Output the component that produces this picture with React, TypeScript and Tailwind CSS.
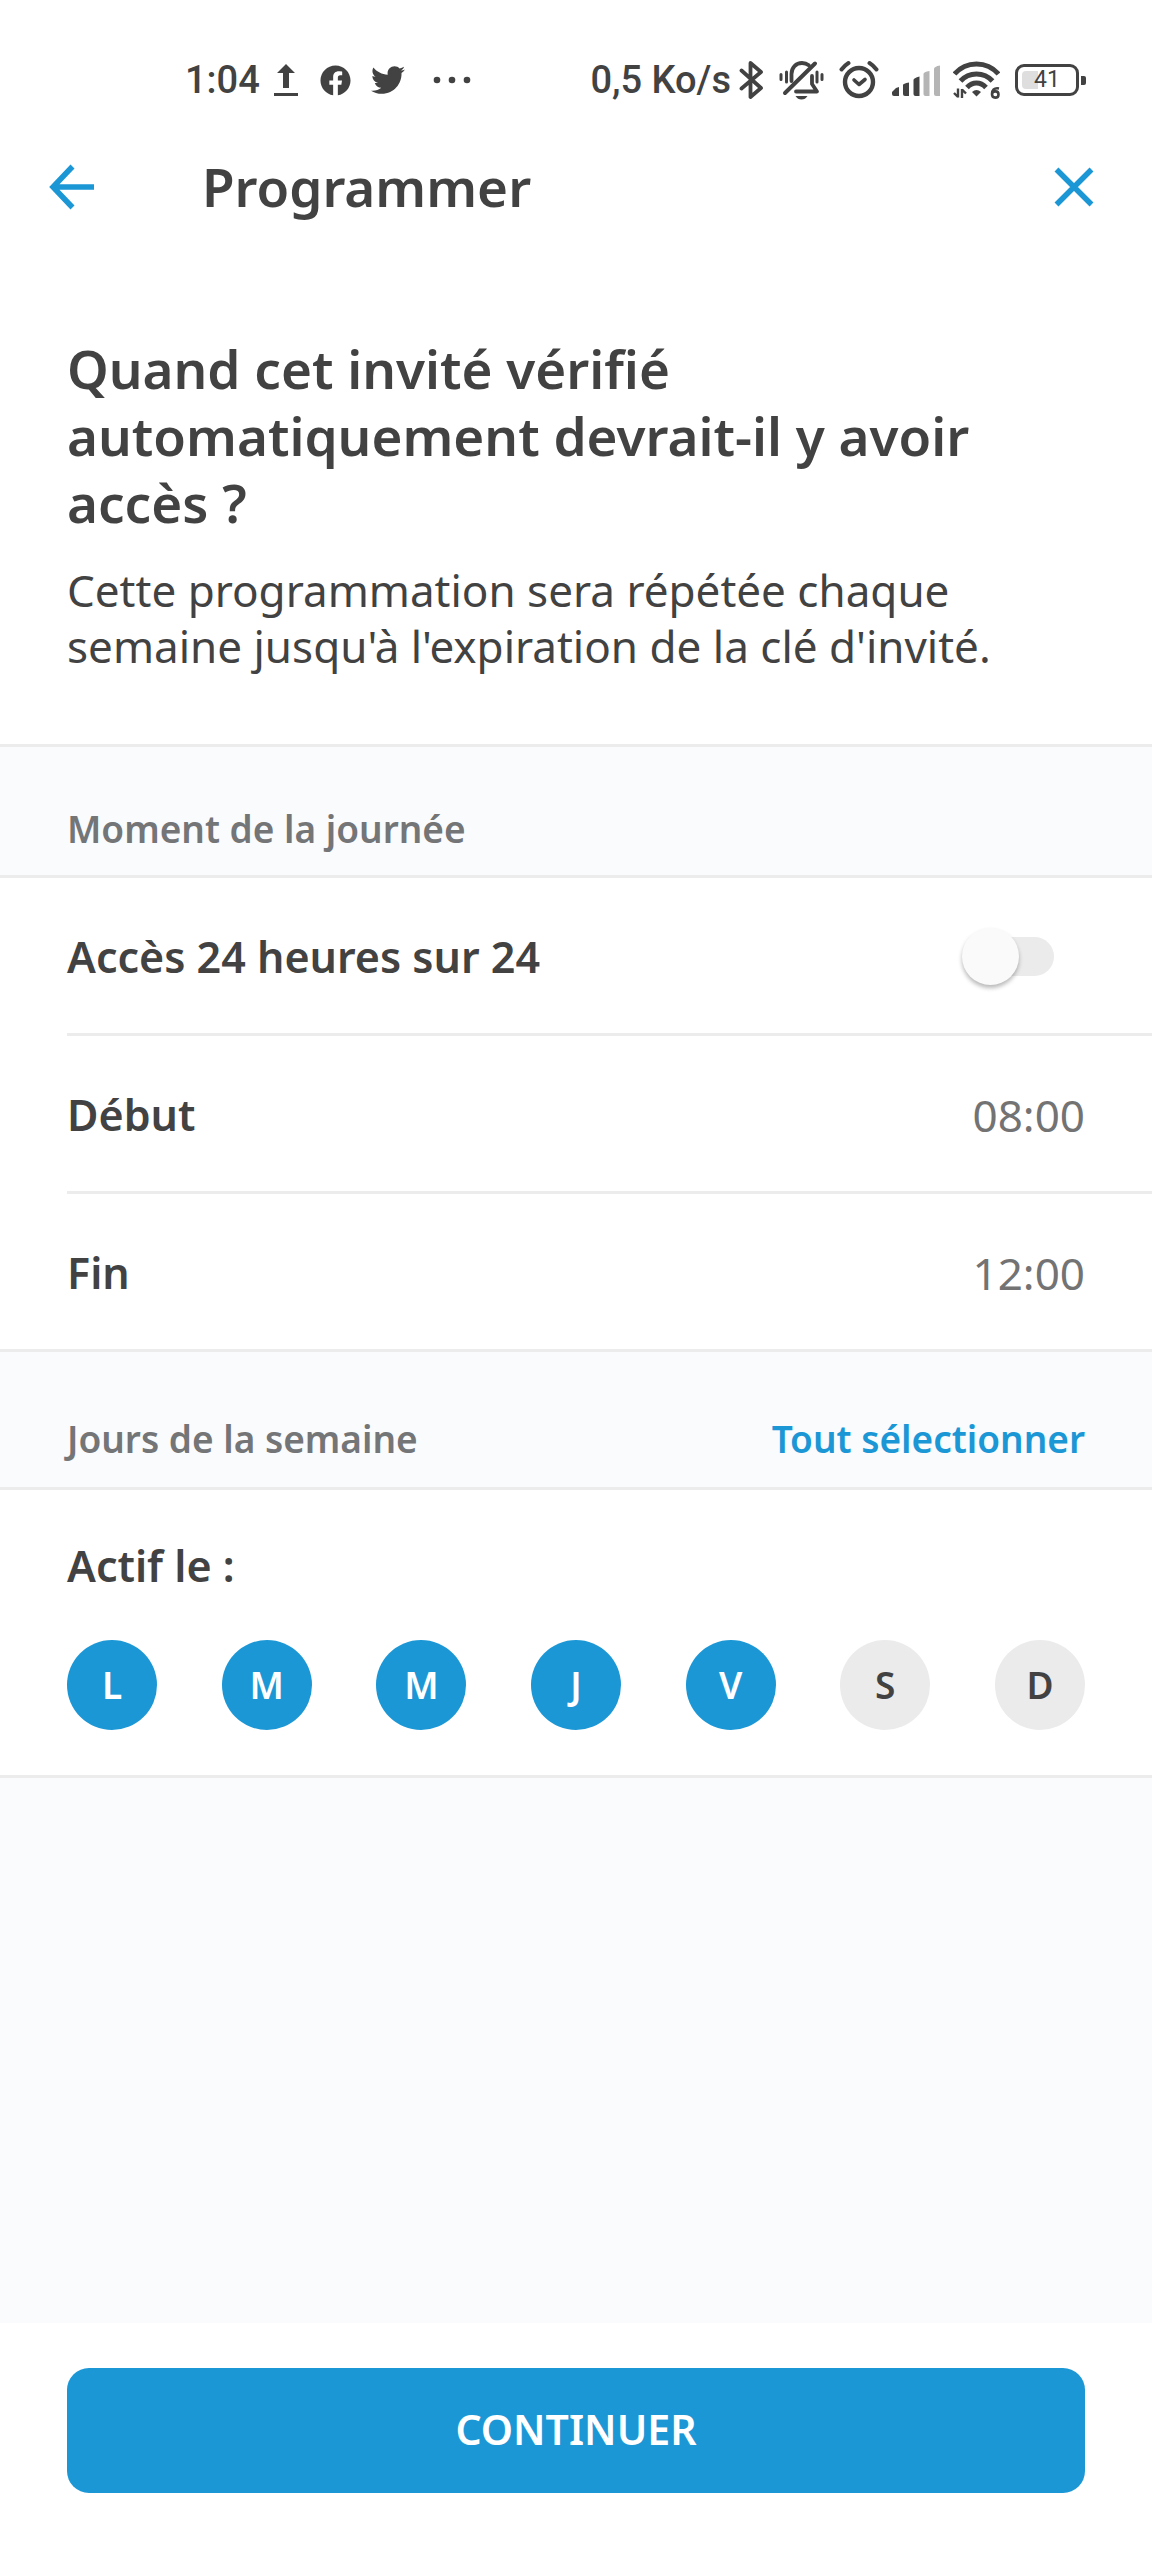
import { useState } from "react";
import { FaFacebook, FaTwitter } from "react-icons/fa";

function UploadIcon() {
  return (
    <svg className="ml-3.5 h-[34px] w-6" viewBox="0 0 24 34" fill="currentColor" aria-hidden="true">
      <path d="M12 1l9 9h-6v15H9V10H3z" />
      <rect x="0" y="30" width="24" height="3" />
    </svg>
  );
}

function DotsIcon() {
  return (
    <svg className="ml-7 h-2 w-[38px]" viewBox="0 0 38 8" fill="currentColor" aria-hidden="true">
      <circle cx="4" cy="4" r="3.3" />
      <circle cx="19" cy="4" r="3.3" />
      <circle cx="34" cy="4" r="3.3" />
    </svg>
  );
}

function BluetoothIcon() {
  return (
    <svg className="ml-2 h-10 w-[25px]" viewBox="0 0 25 40" fill="none" stroke="currentColor" strokeWidth="3.8" strokeLinecap="round" strokeLinejoin="round" aria-hidden="true">
      <path d="M2.5 10.5L22 28 11.5 37V3L22 12 2.5 28.5" />
    </svg>
  );
}

function BellOffIcon() {
  return (
    <svg className="ml-[15px] h-10 w-[45px]" viewBox="0 0 45 40" fill="none" stroke="currentColor" strokeLinecap="round" aria-hidden="true">
      <path strokeWidth="4" d="M6 33L36 3.5" />
      <path strokeWidth="3.8" d="M12.5 21V14c0-6.500 4.500-11 10.500-11 2.800 0 5 .8 6.800 2.200" />
      <path strokeWidth="3.8" strokeLinejoin="round" d="M33 16v8l5 7.500H17" />
      <path strokeWidth="3" d="M2 14.500v5M7.500 12v10M38 12v10M43 14.500v5" />
      <path fill="currentColor" stroke="none" d="M16.500 36h12c-1.400 2.500-3.500 3.500-6 3.500s-4.600-1-6-3.500z" />
    </svg>
  );
}

function AlarmIcon() {
  return (
    <svg className="ml-[15px] h-10 w-10" viewBox="0 0 40 40" fill="none" stroke="currentColor" strokeLinecap="round" aria-hidden="true">
      <circle cx="20" cy="22" r="14" strokeWidth="4.4" />
      <path strokeWidth="3.6" strokeLinejoin="round" d="M15 20l5 4.500 6-5" />
      <path strokeWidth="4" d="M2.500 9.500q3-4 7-6.500M37.500 9.500q-3-4-7-6.500" />
    </svg>
  );
}

function SignalIcon() {
  return (
    <svg className="ml-[13px] h-8 w-12" viewBox="0 0 48 32" fill="currentColor" aria-hidden="true">
      <path d="M7 23v9H2q-2 0-2-2v-2l4-4z" />
      <path d="M17 18.500V32h-4q-2 0-2-2v-9q0-1.500 6-2.500z" />
      <path d="M27.500 12.500V32h-4q-2 0-2-2V16q0-2 6-3.500z" />
      <g fill="#b5b5b5">
        <path d="M37.500 7V32h-4q-2 0-2-2V10q0-2 6-3z" />
        <path d="M48 1.500V32h-4q-2 0-2-2V5q0-2.500 6-3.500z" />
      </g>
    </svg>
  );
}

function WifiIcon() {
  return (
    <svg className="ml-[13px] h-[38px] w-[47px]" viewBox="0 0 47 38" fill="none" stroke="currentColor" strokeWidth="5" aria-hidden="true">
      <path d="M1.500 13C13 -.5 34 -.5 45.500 13" />
      <path d="M7.500 20c8.500-9.500 23.500-9.500 32 0" />
      <path d="M14 26.500c5.500-6 13.500-6 19 0" />
      <path fill="currentColor" stroke="none" d="M23.500 35.500L19 31q4.500-4 9 0z" />
      <path strokeWidth="2.400" d="M5 27.500v9M1 32l4 4M9 37v-9M13 32.500l-4-4" />
      <path strokeWidth="2.600" d="M46 27.500c-5-1-7 2-7 5.500 0 2.500 1.500 3.600 3.200 3.600s3.300-1 3.300-3.200-1.500-3-3-3-3 1-3.400 2" />
    </svg>
  );
}

function Battery({ level }: { level: number }) {
  return (
    <div className="ml-[15px] flex items-center gap-0.5" role="img" aria-label={`Batterie ${level} %`}>
      <div className="relative flex h-8 w-16 items-center justify-center rounded-[9px] border-3 border-current">
        <span className="absolute left-1 h-[18px] w-4 rounded-l-[4px] bg-[#dedede]" />
        <span className="relative text-[23px] leading-6 font-normal">{level}</span>
      </div>
      <span className="h-[9px] w-[5px] rounded-r-[2px] bg-current" />
    </div>
  );
}

function StatusBar() {
  return (
    <div className="flex h-[160px] items-center justify-between pr-[66px] pl-[185px] font-['Roboto',sans-serif] text-[38px] leading-[44px] font-medium">
      <div className="flex items-center">
        <span>1:04</span>
        <UploadIcon />
        <FaFacebook className="ml-[22px] size-[31px]" aria-hidden="true" />
        <FaTwitter className="ml-5 size-[34px]" aria-hidden="true" />
        <DotsIcon />
      </div>
      <div className="flex items-center">
        <span>0,5 Ko/s</span>
        <BluetoothIcon />
        <BellOffIcon />
        <AlarmIcon />
        <SignalIcon />
        <WifiIcon />
        <Battery level={41} />
      </div>
    </div>
  );
}

function TimeRow({ id, label, value }: { id: string; label: string; value: string }) {
  return (
    <div className="ml-[67px] flex h-[158px] items-center justify-between border-t-3 border-[#ececec] pt-0.5 pr-[67px]">
      <span id={id} className="text-[43px] leading-[56px] font-semibold">{label}</span>
      <button type="button" aria-describedby={id} className="text-[44px] leading-[56px] font-normal text-[#737373]">
        {value}
      </button>
    </div>
  );
}

const DAYS = [
  { name: "Lundi", letter: "L" },
  { name: "Mardi", letter: "M" },
  { name: "Mercredi", letter: "M" },
  { name: "Jeudi", letter: "J" },
  { name: "Vendredi", letter: "V" },
  { name: "Samedi", letter: "S" },
  { name: "Dimanche", letter: "D" },
];

export default function App() {
  const [allDay, setAllDay] = useState(false);
  const [active, setActive] = useState([true, true, true, true, true, false, false]);

  return (
    <div className="flex min-h-screen flex-col bg-white font-['Noto_Sans',sans-serif] text-[#424242]">
      <StatusBar />

      <header className="flex h-[54px] items-center pr-[58px] pl-12">
        <button type="button" aria-label="Retour" className="text-[#1c97d6]">
          <svg className="h-12 w-[46px]" viewBox="0 0 46 48" fill="none" stroke="currentColor" strokeWidth="5.500" aria-hidden="true">
            <path d="M24.500 3.500L5 24l19.500 20.500M5 24h41" />
          </svg>
        </button>
        <h1 className="ml-[108px] flex-1 text-[53px] leading-[54px] font-semibold">Programmer</h1>
        <button type="button" aria-label="Fermer" className="text-[#1c97d6]">
          <svg className="size-10" viewBox="0 0 40 40" fill="none" stroke="currentColor" strokeWidth="5.500" aria-hidden="true">
            <path d="M2.500 2.500l35 35M37.500 2.500l-35 35" />
          </svg>
        </button>
      </header>

      <section className="px-[67px] pt-[121px] pb-[70px]">
        <h2 className="text-[53px] leading-[67px] font-semibold">
          Quand cet invité vérifié automatiquement devrait-il y avoir accès ?
        </h2>
        <p className="mt-[26px] text-[44px] leading-[56px] font-normal">
          Cette programmation sera répétée chaque semaine jusqu'à l'expiration de la clé d'invité.
        </p>
      </section>

      <div className="border-y-3 border-[#ececec] bg-[#fafbfd] px-[67px] pt-[58px] pb-[22px]">
        <h3 className="text-[37px] leading-[48px] font-semibold text-[#747577]">Moment de la journée</h3>
      </div>

      <section>
        <div className="flex h-[155px] items-center justify-between pt-0.5 pr-[98px] pl-[67px]">
          <label htmlFor="all-day" className="text-[43px] leading-[56px] font-semibold">Accès 24 heures sur 24</label>
          <span className="relative flex h-[57px] w-[92px] items-center">
            <input
              id="all-day"
              type="checkbox"
              role="switch"
              checked={allDay}
              onChange={(e) => setAllDay(e.target.checked)}
              className="peer ml-2 h-[39px] w-[84px] appearance-none rounded-full bg-[#ebebeb] checked:bg-[#a4d5ef]"
            />
            <span className="pointer-events-none absolute left-0 size-[57px] rounded-full bg-[#fafafa] shadow-[0_3px_4px_rgba(0,0,0,0.28)] peer-checked:right-0 peer-checked:left-auto peer-checked:bg-[#1c97d6]" />
          </span>
        </div>
        <TimeRow id="start" label="Début" value="08:00" />
        <TimeRow id="end" label="Fin" value="12:00" />
      </section>

      <div className="flex items-center justify-between border-y-3 border-[#ececec] bg-[#fafbfd] px-[67px] pt-[63px] pb-6">
        <h3 className="text-[37px] leading-[48px] font-semibold text-[#747577]">Jours de la semaine</h3>
        <button
          type="button"
          onClick={() => setActive(DAYS.map(() => true))}
          className="text-[37px] leading-[48px] font-semibold text-[#1c97d6]"
        >
          Tout sélectionner
        </button>
      </div>

      <section className="px-[67px] pt-12 pb-[45px]">
        <h3 className="text-[43px] leading-[56px] font-semibold">Actif le :</h3>
        <div className="mt-[46px] flex justify-between">
          {DAYS.map((day, i) => (
            <button
              key={day.name}
              type="button"
              aria-label={day.name}
              aria-pressed={active[i]}
              onClick={() => setActive(active.map((on, j) => (j === i ? !on : on)))}
              className="size-[90px] rounded-full bg-[#ebebeb] text-[37px] leading-[48px] font-semibold aria-pressed:bg-[#1c97d6] aria-pressed:text-white"
            >
              {day.letter}
            </button>
          ))}
        </div>
      </section>

      <div className="flex-1 border-t-3 border-[#ececec] bg-[#fafbfd]" />

      <footer className="px-[67px] pt-[45px] pb-[67px]">
        <button type="button" className="h-[125px] w-full rounded-[22px] bg-[#1c97d6] pb-1 text-[41px] leading-[48px] font-semibold text-white">
          CONTINUER
        </button>
      </footer>
    </div>
  );
}
